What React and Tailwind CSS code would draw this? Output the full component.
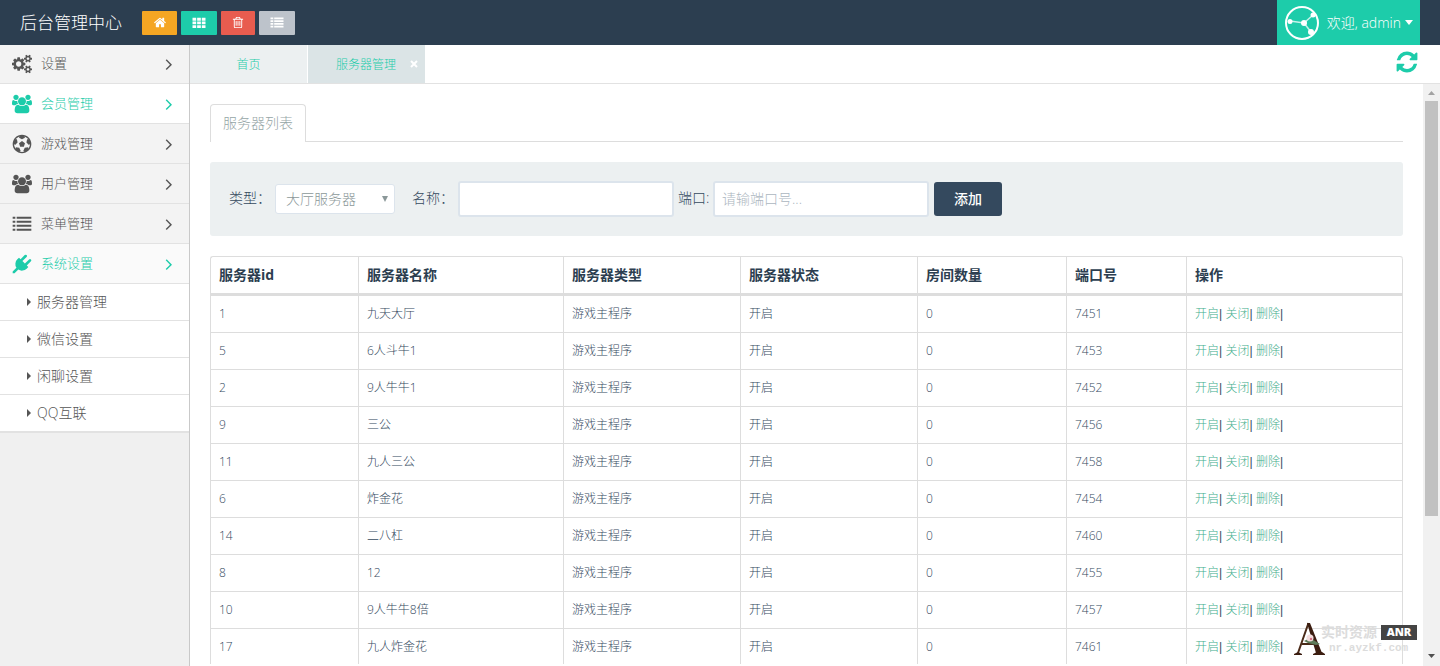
import React, { useState } from 'react';

const paths = {
  home: 'M1472 992v480q0 26-19 45t-45 19h-384v-384h-256v384h-384q-26 0-45-19t-19-45v-480q0-1 .5-3t.5-3l575-474 575 474q1 2 1 6zm223-69l-62 74q-8 9-21 11h-3q-13 0-21-7l-692-577-692 577q-12 8-24 7-13-2-21-11l-62-74q-8-10-7-23.5t11-21.5l719-599q32-26 76-26t76 26l244 204v-195q0-14 9-23t23-9h192q14 0 23 9t9 23v408l219 182q10 8 11 21.5t-7 23.5z',
  grid: 'M0 256h512v384H0zM640 256h512v384H640zM1280 256h512v384h-512zM0 768h512v384H0zM640 768h512v384H640zM1280 768h512v384h-512zM0 1280h512v384H0zM640 1280h512v384H640zM1280 1280h512v384h-512z',
  trash: 'M704 736v576q0 14-9 23t-23 9h-64q-14 0-23-9t-9-23v-576q0-14 9-23t23-9h64q14 0 23 9t9 23zm256 0v576q0 14-9 23t-23 9h-64q-14 0-23-9t-9-23v-576q0-14 9-23t23-9h64q14 0 23 9t9 23zm256 0v576q0 14-9 23t-23 9h-64q-14 0-23-9t-9-23v-576q0-14 9-23t23-9h64q14 0 23 9t9 23zm128 724v-948h-896v948q0 22 7 40.5t14.5 27 10.5 8.5h832q3 0 10.5-8.5t14.5-27 7-40.5zm-672-1076h448l-48-117q-7-9-17-11h-317q-10 2-17 11zm928 32v64q0 14-9 23t-23 9h-96v948q0 83-47 143.5t-113 60.5h-832q-66 0-113-58.5t-47-141.5v-952h-96q-14 0-23-9t-9-23v-64q0-14 9-23t23-9h309l70-167q15-37 54-63t79-26h320q40 0 79 26t54 63l70 167h309q14 0 23 9t9 23z',
  thList: 'M0 192h384v256H0zM512 192h1280v256H512zM0 576h384v256H0zM512 576h1280v256H512zM0 960h384v256H0zM512 960h1280v256H512zM0 1344h384v256H0zM512 1344h1280v256H512z',
  list: 'M0 192h256v192H0zM384 192h1408v192H384zM0 576h256v192H0zM384 576h1408v192H384zM0 960h256v192H0zM384 960h1408v192H384zM0 1344h256v192H0zM384 1344h1408v192H384z',
  cogs: 'M832 896q0-106-75-181t-181-75-181 75-75 181 75 181 181 75 181-75 75-181zm768 512q0-52-38-90t-90-38-90 38-38 90q0 53 37.5 90.5t90.5 37.5 90.5-37.5 37.5-90.5zm0-1024q0-52-38-90t-90-38-90 38-38 90q0 53 37.5 90.5t90.5 37.5 90.5-37.5 37.5-90.5zm-384 421v185q0 10-7 19.5t-16 10.5l-155 24q-11 35-32 76 34 48 90 115 7 11 7 20 0 12-7 19-23 30-82.5 89.5t-78.5 59.5q-11 0-21-7l-115-90q-37 19-77 31-11 108-23 155-7 24-30 24h-186q-11 0-20-7.5t-10-17.5l-23-153q-34-10-75-31l-118 89q-7 7-20 7-11 0-21-8-144-133-144-160 0-9 7-19 10-14 41-53t47-61q-23-44-35-82l-152-24q-10-1-17-9.5t-7-19.5v-185q0-10 7-19.5t16-10.5l155-24q11-35 32-76-34-48-90-115-7-11-7-20 0-12 7-20 22-30 82-89t79-59q11 0 21 7l115 90q34-18 77-32 11-108 23-154 7-24 30-24h186q11 0 20 7.5t10 17.5l23 153q34 10 75 31l118-89q8-7 20-7 11 0 21 8 144 133 144 160 0 8-7 19-12 16-42 54t-45 60q23 48 34 82l152 23q10 2 17 10.5t7 19.5zm640 533v140q0 16-149 31-12 27-30 52 51 113 51 138 0 4-4 7-122 71-124 71-8 0-46-47t-52-68q-20 2-30 2t-30-2q-14 21-52 68t-46 47q-2 0-124-71-4-3-4-7 0-25 51-138-18-25-30-52-149-15-149-31v-140q0-16 149-31 13-29 30-52-51-113-51-138 0-4 4-7 4-2 35-20t59-34 30-16q8 0 46 46.5t52 67.5q20-2 30-2t30 2q51-71 92-112l6-2q4 0 124 70 4 3 4 7 0 25-51 138 17 23 30 52 149 15 149 31zm0-1024v140q0 16-149 31-12 27-30 52 51 113 51 138 0 4-4 7-122 71-124 71-8 0-46-47t-52-68q-20 2-30 2t-30-2q-14 21-52 68t-46 47q-2 0-124-71-4-3-4-7 0-25 51-138-18-25-30-52-149-15-149-31v-140q0-16 149-31 13-29 30-52-51-113-51-138 0-4 4-7 4-2 35-20t59-34 30-16q8 0 46 46.5t52 67.5q20-2 30-2t30 2q51-71 92-112l6-2q4 0 124 70 4 3 4 7 0 25-51 138 17 23 30 52 149 15 149 31z',
  group: 'M529 896q-162 5-265 128h-134q-82 0-138-40.5t-56-118.5q0-353 124-353 6 0 43.5 21t97.5 42.5 119 21.5q67 0 133-23-5 37-5 66 0 139 81 256zm1071 637q0 120-73 189.5t-194 69.5h-874q-121 0-194-69.5t-73-189.5q0-53 3.5-103.5t14-109 26.5-108.5 43-97.5 62-81 85.5-53.5 111.5-20q10 0 43 21.5t73 48 107 48 135 21.5 135-21.5 107-48 73-48 43-21.5q61 0 111.5 20t85.5 53.5 62 81 43 97.5 26.5 108.5 14 109 3.5 103.5zm-1024-1277q0 106-75 181t-181 75-181-75-75-181 75-181 181-75 181 75 75 181zm704 384q0 159-112.5 271.5t-271.5 112.5-271.5-112.5-112.5-271.5 112.5-271.5 271.5-112.5 271.5 112.5 112.5 271.5zm576 225q0 78-56 118.5t-138 40.5h-134q-103-123-265-128 81-117 81-256 0-29-5-66 66 23 133 23 59 0 119-21.5t97.5-42.5 43.5-21q124 0 124 353zm-128-609q0 106-75 181t-181 75-181-75-75-181 75-181 181-75 181 75 75 181z',
  futbol: 'M609 816l287-208 287 208-109 336h-355zm287-816q182 0 348 71t286 191 191 286 71 348-71 348-191 286-286 191-348 71-348-71-286-191-191-286-71-348 71-348 191-286 286-191 348-71zm619 1350q149-203 149-454v-3l-102 89-240-224 63-323 134 12q-150-206-389-282l53 124-287 159-287-159 53-124q-239 76-389 282l135-12 62 323-240 224-102-89v3q0 251 149 454l30-132 326 40 139 298-116 69q117 39 240 39t240-39l-116-69 139-298 326-40z',
  plug: 'M1755 453q37 38 37 90.5t-37 90.5l-401 400 150 150-160 160q-163 163-389.5 186.5t-411.5-100.5l-362 362h-181v-181l362-362q-124-185-100.5-411.5t186.5-389.5l160-160 150 150 400-401q38-37 91-37t90 37 37 90.5-37 90.5l-400 401 234 234 401-400q38-37 91-37t90 37z',
  angleRight: 'M1171 960q0 13-10 23l-466 466q-10 10-23 10t-23-10l-50-50q-10-10-10-23t10-23l393-393-393-393q-10-10-10-23t10-23l50-50q10-10 23-10t23 10l466 466q10 10 10 23z',
  refresh: 'M1639 1056q0 5-1 7-64 268-268 434.5t-478 166.5q-146 0-282.5-55t-243.5-157l-129 129q-19 19-45 19t-45-19-19-45v-448q0-26 19-45t45-19h448q26 0 45 19t19 45-19 45l-137 137q71 66 161 102t187 36q134 0 250-65t186-179q11-17 53-117 8-23 30-23h192q13 0 22.5 9.5t9.5 22.5zm25-800v448q0 26-19 45t-45 19h-448q-26 0-45-19t-19-45 19-45l138-138q-148-137-349-137-134 0-250 65t-186 179q-11 17-53 117-8 23-30 23h-199q-13 0-22.5-9.5t-9.5-22.5v-7q65-268 270-434.5t480-166.5q146 0 284 55.5t245 156.5l130-129q19-19 45-19t45 19 19 45z',
};

const Icon = ({ name, className }) => (
  <svg viewBox="-64 0 1920 1792" fill="currentColor" className={className} aria-hidden="true">
    <path d={paths[name]} />
  </svg>
);

const shortcuts = [
  { icon: 'home', label: '首页', color: 'bg-[#f5a623] w-[35px]' },
  { icon: 'grid', label: '应用', color: 'bg-[#1dccaa] w-9' },
  { icon: 'trash', label: '清理', color: 'bg-[#e85c4f] w-[34px]' },
  { icon: 'thList', label: '列表', color: 'bg-[#bdc3cb] w-9' },
];

const menu = [
  { icon: 'cogs', label: '设置' },
  { icon: 'group', label: '会员管理', tone: 'bg-white text-[#1dccaa]' },
  { icon: 'futbol', label: '游戏管理' },
  { icon: 'group', label: '用户管理' },
  { icon: 'list', label: '菜单管理' },
  { icon: 'plug', label: '系统设置', tone: 'bg-[#fafafa] text-[#1dccaa]' },
];

const submenu = ['服务器管理', '微信设置', '闲聊设置', 'QQ互联'];

const columns = [
  { title: '服务器id', width: 'w-[148px]' },
  { title: '服务器名称', width: 'w-[205px]' },
  { title: '服务器类型', width: 'w-[177px]' },
  { title: '服务器状态', width: 'w-[177px]' },
  { title: '房间数量', width: 'w-[149px]' },
  { title: '端口号', width: 'w-[120px]' },
  { title: '操作', width: '' },
];

const servers = [
  { id: 1, name: '九天大厅', port: 7451 },
  { id: 5, name: '6人斗牛1', port: 7453 },
  { id: 2, name: '9人牛牛1', port: 7452 },
  { id: 9, name: '三公', port: 7456 },
  { id: 11, name: '九人三公', port: 7458 },
  { id: 6, name: '炸金花', port: 7454 },
  { id: 14, name: '二八杠', port: 7460 },
  { id: 8, name: '12', port: 7455 },
  { id: 10, name: '9人牛牛8倍', port: 7457 },
  { id: 17, name: '九人炸金花', port: 7461 },
];

const Header = () => (
  <header className="flex h-[45px] shrink-0 items-center bg-[#2c3e50] pr-5 pl-5 text-white">
    <h1 className="mr-5 text-[17px] leading-6">后台管理中心</h1>
    <div className="flex gap-1">
      {shortcuts.map(({ icon, label, color }) => (
        <button key={icon} aria-label={label} className={`flex h-6 items-center justify-center rounded-[1px] ${color}`}>
          <Icon name={icon} className="h-[13px] w-[14px]" />
        </button>
      ))}
    </div>
    <button className="ml-auto flex h-full items-center bg-[#1dccaa] pr-[7px] pl-2 text-sm">
      <svg viewBox="0 0 34 34" className="mr-2 h-[34px] w-[34px]" fill="none" stroke="#fff" aria-hidden="true">
        <circle cx="17" cy="17" r="16" strokeWidth="2" />
        <path d="M5 15l14 2 9-8M19 17l7 9" strokeWidth="1.5" strokeOpacity="0.75" />
        <g fill="#fff" stroke="none">
          <circle cx="5" cy="15.500" r="2.500" />
          <circle cx="19" cy="17" r="3" />
          <circle cx="28" cy="9" r="2.500" />
          <circle cx="26" cy="26" r="3" />
        </g>
      </svg>
      欢迎, admin
      <svg viewBox="0 0 8 5" className="ml-1 h-[5px] w-2" fill="currentColor" aria-hidden="true">
        <path d="M0 0h8L4 5z" />
      </svg>
    </button>
  </header>
);

const Sidebar = () => (
  <nav className="w-[190px] shrink-0 border-r border-[#c9c9c9] bg-[#f0f0f0]">
    <ul className="text-[13px]">
      {menu.map(({ icon, label, tone = 'bg-[#f3f3f3] text-[#555]' }) => (
        <li key={label} className="h-10 first:h-[39px]">
          <a href="#" className={`flex h-full items-center border-b border-[#e2e2e2] pr-[10px] pl-3 ${tone}`}>
            <Icon name={icon} className="mr-[9px] h-5 w-5" />
            <span className="flex-1">{label}</span>
            <Icon name="angleRight" className="h-5 w-5" />
          </a>
        </li>
      ))}
    </ul>
    <ul className="border-b border-[#e2e2e2] text-sm text-[#555]">
      {submenu.map((label) => (
        <li key={label}>
          <a href="#" className="flex h-[37px] items-center border-b border-[#e2e2e2] bg-white pl-[27px]">
            <svg viewBox="0 0 4 8" className="mr-[6px] h-2 w-1" fill="currentColor" aria-hidden="true">
              <path d="M0 0l4 4-4 4z" />
            </svg>
            {label}
          </a>
        </li>
      ))}
    </ul>
  </nav>
);

const TabBar = () => (
  <div className="flex h-[39px] shrink-0 border-b border-[#e2e2e2] text-xs text-[#1dccaa]">
    <a href="#" className="mr-px flex w-[117px] items-center justify-center bg-[#ecf0f1] pt-[2px]">首页</a>
    <div className="flex w-[117px] items-center bg-[#dbe4e6]">
      <a href="#" className="flex-1 pt-[2px] pl-7">服务器管理</a>
      <button aria-label="关闭标签" className="mr-[7px] text-white">
        <svg viewBox="0 0 8 8" className="h-2 w-2" fill="none" stroke="currentColor" strokeWidth="2" aria-hidden="true">
          <path d="M1 1l6 6M7 1L1 7" />
        </svg>
      </button>
    </div>
    <button aria-label="刷新" className="mr-5 ml-auto pb-1 text-[#1dccaa]">
      <Icon name="refresh" className="h-[26px] w-[26px]" />
    </button>
  </div>
);

const ServerForm = () => {
  const [type, setType] = useState('hall');
  const labelClass = 'pb-[2px]';
  const inputClass = 'h-9 w-[216px] rounded-[3px] border-2 border-[#dce4ec] bg-white px-[7px] pb-[2px] placeholder:text-[#acb6c0]';

  return (
    <form onSubmit={(e) => e.preventDefault()} className="mt-5 flex h-[74px] items-center rounded-[3px] bg-[#ecf0f1] pl-[19px] text-sm text-[#34495e]">
      <label htmlFor="type" className={`w-[46px] ${labelClass}`}>类型：</label>
      <div className="relative mr-[17px]">
        <select
          id="type"
          value={type}
          onChange={(e) => setType(e.target.value)}
          className="h-[30px] w-[120px] appearance-none rounded-[3px] border border-[#dce4ec] bg-white pl-[10px] text-[#8b9899]"
        >
          <option value="hall">大厅服务器</option>
          <option value="game">游戏服务器</option>
        </select>
        <svg viewBox="0 0 6 6" className="pointer-events-none absolute top-3 right-[7px] h-[6px] w-[6px]" fill="#8b9899" aria-hidden="true">
          <path d="M0 0h6L3 6z" />
        </svg>
      </div>
      <label htmlFor="name" className={`w-[46px] ${labelClass}`}>名称：</label>
      <input id="name" type="text" className={inputClass} />
      <label htmlFor="port" className={`ml-1 w-[35px] ${labelClass}`}>端口:</label>
      <input id="port" type="text" placeholder="请输端口号..." className={inputClass} />
      <button type="submit" className="ml-[5px] h-[34px] w-[68px] rounded-[3px] bg-[#34495e] font-medium text-white">添加</button>
    </form>
  );
};

const ServerTable = () => (
  <table className="mt-5 w-full table-fixed border-separate border-spacing-0 rounded-t-[3px] border-t border-l border-[#dddddd] text-xs text-[#34495e]">
    <thead>
      <tr className="text-sm">
        {columns.map(({ title, width }) => (
          <th key={title} className={`h-[39px] border-r border-b-3 border-[#dddddd] px-2 text-left font-bold text-[#2c3e50] last:rounded-tr-[3px] ${width}`}>
            {title}
          </th>
        ))}
      </tr>
    </thead>
    <tbody>
      {servers.map(({ id, name, port }) => (
        <tr key={id}>
          {[id, name, '游戏主程序', '开启', 0, port].map((value, i) => (
            <td key={i} className="h-[37px] border-r border-b border-[#dddddd] px-2">{value}</td>
          ))}
          <td className="h-[37px] border-r border-b border-[#dddddd] px-2">
            {['开启', '关闭', '删除'].map((action) => (
              <React.Fragment key={action}>
                <a href="#" className="text-[#3fae8c]">{action}</a>
                <span className="font-['Liberation_Sans',sans-serif]">{'| '}</span>
              </React.Fragment>
            ))}
          </td>
        </tr>
      ))}
    </tbody>
  </table>
);

const ScrollTrack = () => (
  <div className="flex w-[17px] shrink-0 flex-col items-center bg-[#f1f1f1]" aria-hidden="true">
    <svg viewBox="0 0 17 17" className="h-[17px] w-[17px] shrink-0" fill="#a3a3a3">
      <path d="M5 11h7L8.500 7z" />
    </svg>
    <div className="h-[415px] w-[13px] bg-[#c1c1c1]" />
    <svg viewBox="0 0 17 17" className="mt-auto h-[17px] w-[17px] shrink-0" fill="#505050">
      <path d="M5 5h7l-3.500 4z" />
    </svg>
  </div>
);

const Watermark = () => (
  <div className="pointer-events-none absolute right-[23px] bottom-[10px] flex items-end">
    <svg viewBox="0 0 32 34" className="-mr-1 h-[34px] w-8" aria-hidden="true">
      <path d="M15.500 1L5 31M9 22h13" fill="none" stroke="#4a2a18" strokeWidth="2" />
      <path d="M14 1l9 30h6L17 1z" fill="#3b1d10" />
      <path d="M1 33v-1l4-2 4 2v1zM20 33v-1l4-2h5l3 2v1z" fill="#3b1d10" />
      <path d="M11 19l6-3 10 6-4 1-8-2z" fill="#5d7a58" />
      <circle cx="17" cy="16" r="3.500" fill="#f3dcdc" />
      <circle cx="18" cy="17" r="1.200" fill="#d66f80" />
    </svg>
    <div className="flex flex-col">
      <div className="flex h-4 items-center">
        <span className="w-[56px] text-sm leading-4 font-bold text-[#dcdcdc]">实时资源</span>
        <span className="ml-1 flex h-[15px] w-9 items-center justify-center bg-[#444] text-[11px] font-extrabold text-white">ANR</span>
      </div>
      <span className="ml-2 font-['Liberation_Mono',monospace] text-[11px] leading-4 font-bold text-[#dcdcdc]">nr.ayzkf.com</span>
    </div>
  </div>
);

const App = () => (
  <div className="relative flex h-screen flex-col overflow-hidden bg-white font-['Open_Sans','Noto_Sans_CJK_SC',sans-serif] font-light">
    <Header />
    <div className="flex min-h-0 flex-1">
      <Sidebar />
      <main className="flex min-w-0 flex-1 flex-col">
        <TabBar />
        <div className="flex min-h-0 flex-1">
          <section className="mb-[2px] min-w-0 flex-1 overflow-hidden px-5 pt-5">
            <div className="flex border-b border-[#dddddd] text-sm">
              <a href="#" className="-mb-px flex h-[38px] items-center rounded-t-[4px] border border-b-0 border-[#dddddd] bg-white px-3 pb-[2px] text-[#95a5a6]">
                服务器列表
              </a>
            </div>
            <ServerForm />
            <ServerTable />
          </section>
          <ScrollTrack />
        </div>
      </main>
    </div>
    <Watermark />
  </div>
);

export default App;
